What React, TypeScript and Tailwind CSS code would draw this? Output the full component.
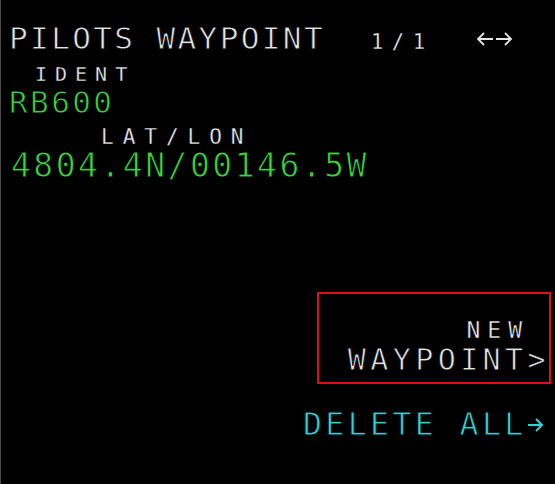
const mono = { fontFamily: '"DejaVu Sans Mono", "Liberation Mono", monospace' };

const big = '[-webkit-text-stroke:0.8px_#000]';

function ArrowPair() {
  return (
    <svg width="38" height="14" viewBox="0 0 38 14" fill="none" stroke="#e6e6e6" strokeWidth="1.8">
      <path d="M2 7H17M8 1L2 7L8 13" />
      <path d="M20 7H35M29 1L35 7L29 13" />
    </svg>
  );
}

function ArrowRight({ color }: { color: string }) {
  return (
    <svg width="17" height="14" viewBox="0 0 17 14" fill="none" stroke={color} strokeWidth="2">
      <path d="M1 7H15M9 1L15 7L9 13" />
    </svg>
  );
}

export default function App() {
  return (
    <div
      className="w-[555px] h-[484px] bg-black border-l border-[#4a4a4a] overflow-hidden flex flex-col"
      style={mono}
    >
      {/* Title row */}
      <div className="mt-[23px] flex items-baseline h-[31px]">
        <span className={`ml-[8px] text-[31px] leading-[31px] tracking-[2.4px] text-[#e6e6e6] ${big}`}>
          PILOTS WAYPOINT
        </span>
        <span className="ml-[46px] text-[20.5px] leading-[31px] tracking-[8.5px] text-[#ededed] [-webkit-text-stroke:0.3px_#000]">
          1/1
        </span>
        <span className="ml-[42px] self-start mt-[9px]">
          <ArrowPair />
        </span>
      </div>

      {/* IDENT */}
      <div className="mt-[10px] ml-[34px] h-[20px] text-[20px] leading-[20px] tracking-[8px] text-[#ededed] [-webkit-text-stroke:0.3px_#000]">
        IDENT
      </div>
      <div className={`mt-[3px] ml-[8px] h-[31px] text-[31px] leading-[31px] tracking-[2.4px] text-[#3ad43a] ${big}`}>
        RB600
      </div>

      {/* LAT/LON */}
      <div className="mt-[9px] ml-[100px] h-[21px] text-[21px] leading-[21px] tracking-[9px] text-[#ededed] [-webkit-text-stroke:0.3px_#000]">
        LAT/LON
      </div>
      <div className={`mt-[2px] ml-[10px] h-[32px] text-[33px] leading-[32px] tracking-[2.5px] text-[#3ad43a] ${big}`}>
        4804.4N/00146.5W
      </div>

      {/* New waypoint prompt */}
      <div className="mt-[110px] ml-[316px] w-[234px] h-[92px] border-2 border-[#e01010] flex flex-col items-end">
        <div className="mt-[25px] mr-[20px] h-[23px] text-[23px] leading-[23px] tracking-[7px] text-[#ededed] [-webkit-text-stroke:0.4px_#000]">
          NEW
        </div>
        <div className={`mt-[3px] mr-[-1px] h-[30px] text-[30px] leading-[30px] tracking-[4.4px] text-[#e6e6e6] ${big}`}>
          WAYPOINT&gt;
        </div>
      </div>

      {/* Delete all */}
      <div className={`mt-[24px] ml-[302px] h-[32px] flex items-center text-[31.5px] leading-[32px] tracking-[3.4px] text-[#2fd3d3] ${big}`}>
        <span>DELETE ALL</span>
        <span className="mt-[2px]">
          <ArrowRight color="#2fd3d3" />
        </span>
      </div>
    </div>
  );
}
